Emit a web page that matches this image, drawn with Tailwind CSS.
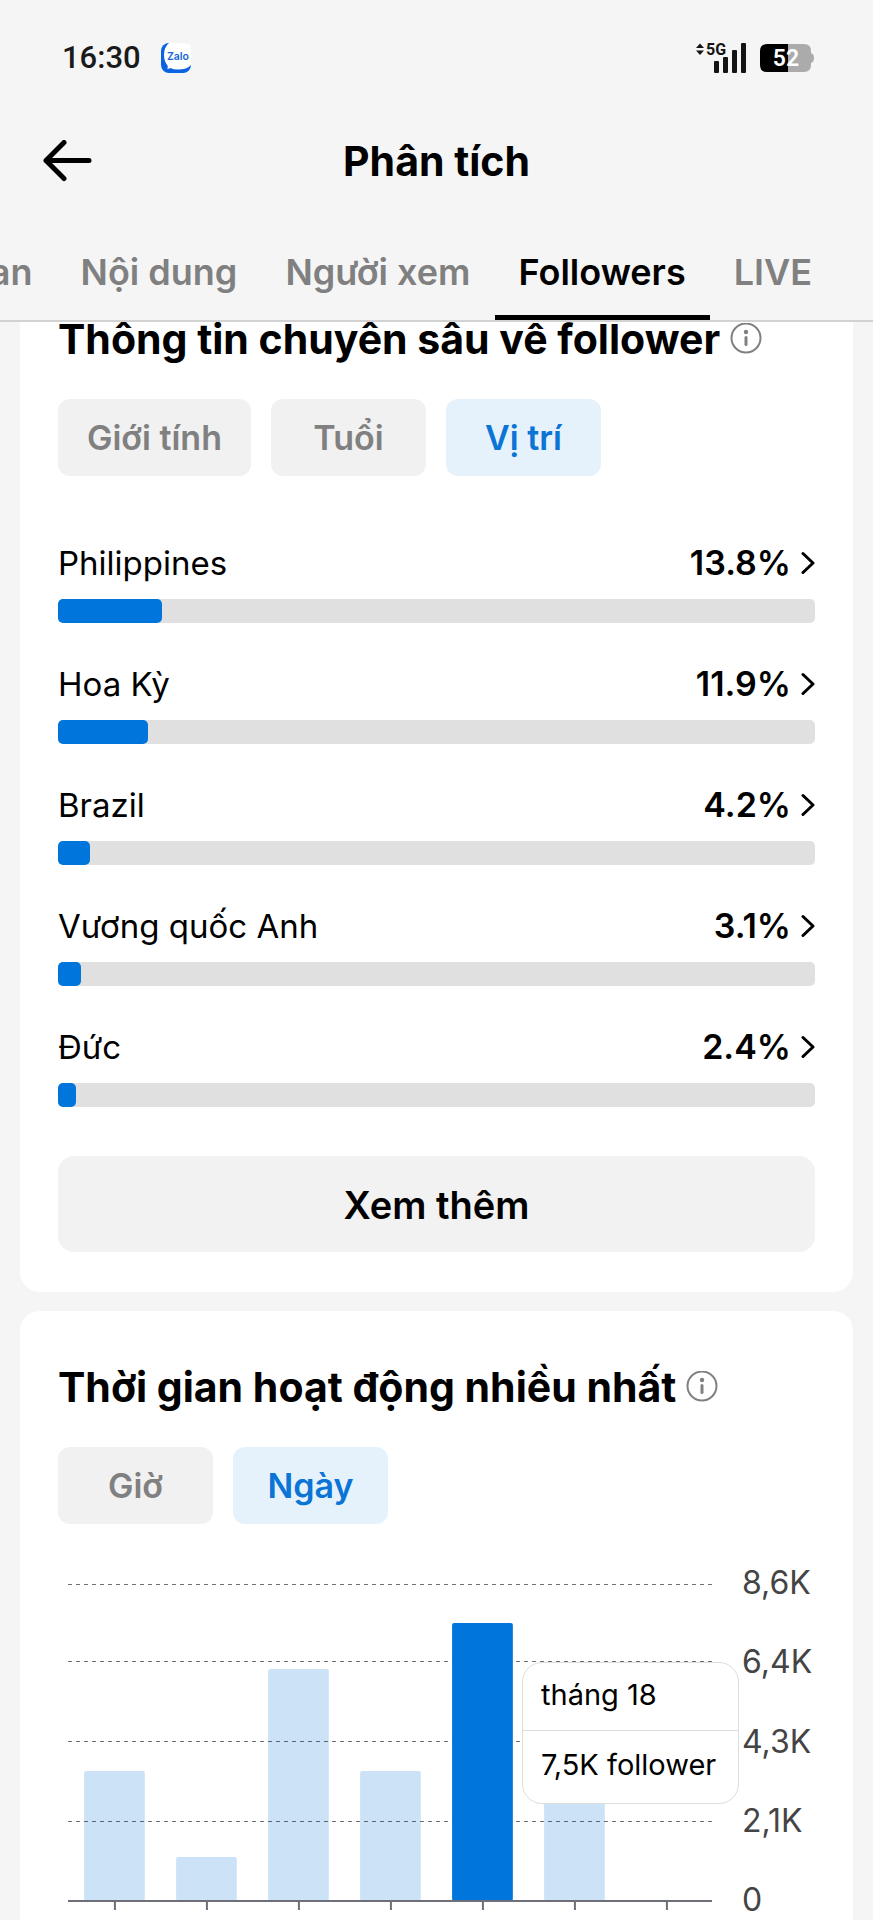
<!DOCTYPE html>
<html lang="vi">
<head>
    <meta charset="UTF-8">
    <meta name="viewport" content="width=device-width, initial-scale=1.0">
    <title>Phân tích</title>
    <script src="https://cdn.jsdelivr.net/npm/@tailwindcss/browser@4"></script>
</head>
<body class="bg-[#f5f5f5] text-black font-['Inter',sans-serif]">
    <div class="h-screen flex flex-col overflow-hidden">
        <header class="shrink-0 border-b-2 border-[#d2d2d2]">
            <!-- Status bar -->
            <div class="h-[115px] pl-[62px] pr-[59px] flex items-center justify-between">
                <div class="flex items-center gap-5 text-[#1a1a1a]">
                    <span class="text-[31px] leading-10 font-medium font-['Roboto',sans-serif]">16:30</span>
                    <svg class="w-[30px] h-[30px]" viewBox="0 0 30 30">
                        <rect width="30" height="30" rx="8" fill="#0b63e0" />
                        <path d="M8 0H24Q30 0 30 6V22Q26 26.500 17 26.500Q12 26.500 9.500 25Q8 26 6 25.500Q7.500 24.500 6.500 22.500Q3 18 3 12Q3 4 8 0Z" fill="#fff" />
                        <text x="17" y="17" text-anchor="middle" font-family="Inter, sans-serif" font-size="10.500" font-weight="600" fill="#1566d6">Zalo</text>
                    </svg>
                </div>
                <div class="flex items-center gap-[14px]">
                    <svg class="w-[50px] h-[30px] overflow-visible" viewBox="0 0 50 30" fill="#141414">
                        <path d="M0 5L4 0.500L8 5ZM0 7.500H8L4 12Z" />
                        <text x="10" y="12" font-family="Roboto, sans-serif" font-size="16" font-weight="700">5G</text>
                        <rect x="18" y="18" width="5" height="12" rx="1" />
                        <rect x="27" y="14" width="5" height="16" rx="1" />
                        <rect x="36" y="7" width="5" height="23" rx="1" />
                        <rect x="45" y="0" width="5" height="30" rx="1" />
                    </svg>
                    <svg class="w-[54px] h-7" viewBox="0 0 54 28">
                        <path d="M8 0H44Q51 0 51 7V9Q54 10 54 14Q54 18 51 19V21Q51 28 44 28H8Z" fill="#ababab" />
                        <path d="M7 0H28V28H7Q0 28 0 21V7Q0 0 7 0Z" fill="#000" />
                        <text x="26" y="22" text-anchor="middle" font-family="Roboto, sans-serif" font-size="23" font-weight="600" fill="#fff">52</text>
                    </svg>
                </div>
            </div>

            <!-- Title bar -->
            <div class="h-[91px] px-[42px] grid grid-cols-[50px_1fr_50px] items-center">
                <button type="button" aria-label="Quay lại">
                    <svg class="w-[50px] h-[42px]" viewBox="0 0 50 42" fill="none" stroke="currentColor" stroke-width="5" stroke-linecap="round" stroke-linejoin="round">
                        <path d="M22 2.500L4 20.500L22 38.500M4 20.500H47" />
                    </svg>
                </button>
                <h1 class="text-center text-[41px] leading-12 font-bold">Phân tích</h1>
            </div>

            <!-- Tabs -->
            <nav class="h-[114px] flex justify-end items-stretch pr-[37px] whitespace-nowrap text-[36px] leading-12 font-semibold text-[#808080]">
                <a href="#" class="px-6 pt-[22px] flex items-center border-b-5 border-transparent">Tổng quan</a>
                <a href="#" class="px-6 pt-[22px] flex items-center border-b-5 border-transparent">Nội dung</a>
                <a href="#" class="px-6 pt-[22px] flex items-center border-b-5 border-transparent">Người xem</a>
                <a href="#" class="px-6 pt-[22px] flex items-center border-b-5 border-black text-black">Followers</a>
                <a href="#" class="px-6 pt-[22px] flex items-center border-b-5 border-transparent">LIVE</a>
            </nav>
        </header>

        <main class="flex-1 min-h-0 overflow-hidden flex flex-col gap-[19px] px-5">
            <section class="-mt-[59px] shrink-0 bg-white rounded-[20px] px-[38px] pt-[52px] pb-10">
                <div class="flex items-center gap-[10px]">
                    <h2 class="text-[41px] leading-12 font-bold">Thông tin chuyên sâu về follower</h2>
                    <button type="button" aria-label="Thông tin">
                        <svg class="w-8 h-8" viewBox="0 0 32 32" fill="none" stroke="#808080">
                            <circle cx="16" cy="15" r="14.500" stroke-width="2" />
                            <path d="M16 14.500V21.500" stroke-width="3" stroke-linecap="round" />
                            <circle cx="16" cy="9" r="2.200" fill="#808080" stroke="none" />
                        </svg>
                    </button>
                </div>
                <div class="mt-9 flex gap-5 text-[34px] leading-10 font-semibold">
                    <button type="button" class="h-[77px] min-w-[155px] px-[29px] rounded-xl bg-[#f1f1f1] text-[#808080]">Giới tính</button>
                    <button type="button" class="h-[77px] min-w-[155px] px-[29px] rounded-xl bg-[#f1f1f1] text-[#808080]">Tuổi</button>
                    <button type="button" class="h-[77px] min-w-[155px] px-[29px] rounded-xl bg-[#e5f2fc] text-[#0b74d5]">Vị trí</button>
                </div>

                <ul id="locations" class="mt-[63px] space-y-[37px]"></ul>

                <button type="button" class="mt-[49px] w-full h-24 pt-[2px] rounded-2xl bg-[#f2f2f2] text-[38px] leading-12 font-semibold">Xem thêm</button>
            </section>

            <section class="flex-1 bg-white rounded-t-[20px] px-[38px] pt-[52px]">
                <div class="flex items-center gap-[10px]">
                    <h2 class="text-[41px] leading-12 font-bold">Thời gian hoạt động nhiều nhất</h2>
                    <button type="button" aria-label="Thông tin">
                        <svg class="w-8 h-8" viewBox="0 0 32 32" fill="none" stroke="#808080">
                            <circle cx="16" cy="15" r="14.500" stroke-width="2" />
                            <path d="M16 14.500V21.500" stroke-width="3" stroke-linecap="round" />
                            <circle cx="16" cy="9" r="2.200" fill="#808080" stroke="none" />
                        </svg>
                    </button>
                </div>
                <div class="mt-9 flex gap-5 text-[34px] leading-10 font-semibold">
                    <button type="button" class="h-[77px] min-w-[155px] px-[29px] rounded-xl bg-[#f1f1f1] text-[#808080]">Giờ</button>
                    <button type="button" class="h-[77px] min-w-[155px] px-[29px] rounded-xl bg-[#e5f2fc] text-[#0b74d5]">Ngày</button>
                </div>

                <div class="mt-9 pl-[10px] flex gap-[30px]">
                    <div class="relative flex-1 pt-6">
                        <svg id="chart" class="w-full h-[328px] block" role="img" aria-label="Follower hoạt động theo ngày"></svg>
                        <!-- Tooltip of the selected bar -->
                        <div class="absolute left-[454px] top-[102px] w-[217px] h-[142px] flex flex-col bg-white border border-[#dddddd] rounded-[20px] text-[29px] leading-9 whitespace-nowrap">
                            <div class="h-[68px] pl-[18px] pb-1 flex items-center border-b border-[#dddddd]">tháng 18</div>
                            <div class="flex-1 pl-[18px] pb-1 flex items-center">7,5K follower</div>
                        </div>
                    </div>
                    <div class="w-[73px] h-[360px] pt-[3px] flex flex-col justify-between text-[32px] leading-10 text-[#444444]">
                        <span>8,6K</span>
                        <span>6,4K</span>
                        <span>4,3K</span>
                        <span>2,1K</span>
                        <span>0</span>
                    </div>
                </div>
            </section>
        </main>
    </div>

    <script>
        const locations = [
            { name: 'Philippines', share: 13.8 },
            { name: 'Hoa Kỳ', share: 11.9 },
            { name: 'Brazil', share: 4.2 },
            { name: 'Vương quốc Anh', share: 3.1 },
            { name: 'Đức', share: 2.4 }
        ];

        document.getElementById('locations').innerHTML = locations.map(item => `
            <li>
                <a href="#" class="flex items-center justify-between text-[33px] leading-12">
                    <span>${item.name}</span>
                    <span class="flex items-center gap-[10px] text-[34px] font-semibold">
                        ${item.share}%
                        <svg class="w-[14px] h-6" viewBox="0 0 14 24" fill="none" stroke="currentColor" stroke-width="3" stroke-linecap="round" stroke-linejoin="round">
                            <path d="M2 2.500L12 12L2 21.500" />
                        </svg>
                    </span>
                </a>
                <div class="mt-3 h-6 rounded-[5px] bg-[#e0e0e0]">
                    <div class="h-6 rounded-[5px] bg-[#0075dc]" style="width: ${item.share}%"></div>
                </div>
            </li>
        `).join('');

        // bar heights in px above the axis
        const days = [130, 44, 232, 130, 278, 150, 0];
        const selected = 4;
        const axis = 317;
        const slot = 100 / days.length;

        const bar = (i, fill) => `
            <rect x="${slot * (i + 0.175)}%" y="${axis - days[i]}" width="${slot * 0.66}%" height="${days[i]}" rx="2" fill="${fill}" />
        `;
        const gridLine = y => `
            <line x1="0" x2="100%" y1="${y}" y2="${y}" stroke="#000" stroke-opacity="0.55" stroke-dasharray="4 4" />
        `;
        const tick = i => `
            <line x1="${slot * (i + 0.51)}%" x2="${slot * (i + 0.51)}%" y1="${axis}" y2="${axis + 9}" stroke="#6e7079" stroke-width="2" />
        `;

        // grid lines run over the pale bars but under the selected one
        document.getElementById('chart').innerHTML = `
            ${days.map((_, i) => bar(i, '#cce3f7')).join('')}
            ${[0.5, 77.5, 157.5, 237.5].map(gridLine).join('')}
            ${bar(selected, '#0075dc')}
            <line x1="0" x2="100%" y1="${axis}" y2="${axis}" stroke="#6e7079" stroke-width="2" />
            ${days.map((_, i) => tick(i)).join('')}
        `;
    </script>
</body>
</html>
